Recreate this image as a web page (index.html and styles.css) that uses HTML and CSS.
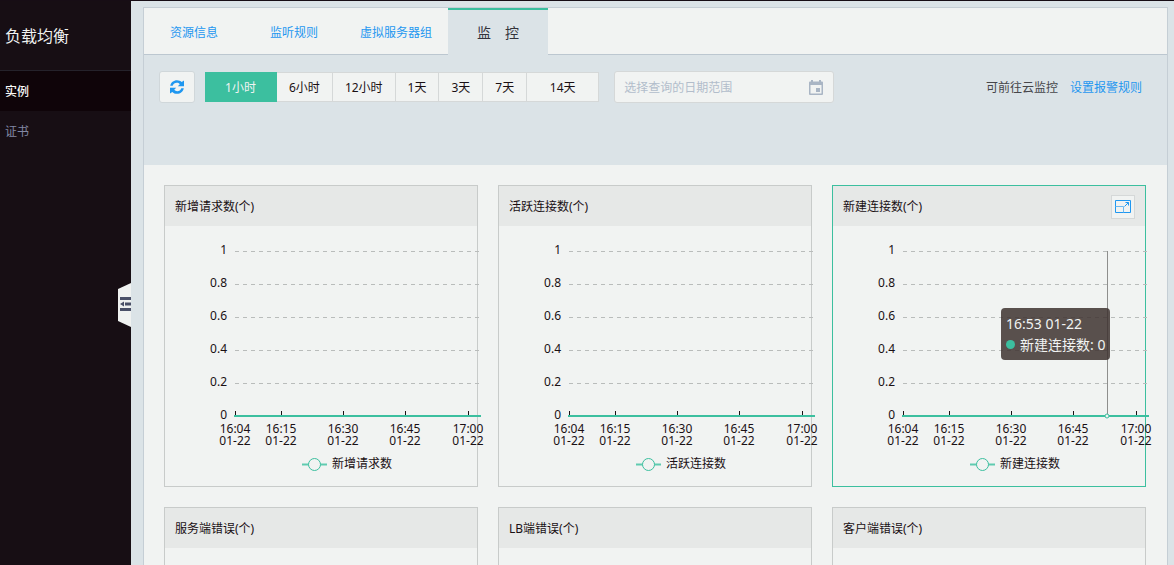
FILE: index.html
```html
<!DOCTYPE html>
<html lang="zh-CN">
<head>
<meta charset="utf-8">
<meta name="viewport" content="width=device-width, initial-scale=1">
<title>负载均衡 - 监控</title>
<link rel="stylesheet" href="styles.css">
</head>
<body>
<div class="layout">
  <aside class="sidebar">
    <h1 class="sidebar-title">负载均衡</h1>
    <nav class="sidebar-nav">
      <a class="nav-item nav-item-active" href="#instances">实例</a>
      <a class="nav-item" href="#certs">证书</a>
    </nav>
    <button class="collapse" type="button" aria-label="收起菜单">
      <svg width="13" height="44" viewBox="0 0 13 44">
        <path d="M13 0 0 6v32l13 6z" fill="#f0f2f1"/>
        <path d="M2 14h11v3H2zM7 19.500h6v3H7zM2 25h11v3H2zM6 18.500v5L2 21z" fill="#4a5068"/>
      </svg>
    </button>
  </aside>

  <main class="main">
    <section class="panel">
      <nav class="tabs">
        <a class="tab" href="#info">资源信息</a>
        <a class="tab" href="#listeners">监听规则</a>
        <a class="tab" href="#groups">虚拟服务器组</a>
        <a class="tab tab-active" href="#monitor">监&emsp;控</a>
      </nav>

      <div class="toolbar">
        <button class="refresh" type="button" aria-label="刷新">
          <svg width="16" height="16" viewBox="0 0 16 16" fill="#1f97f0">
            <path d="M1.200 6.800C1.800 3.400 4.600 1.200 8 1.200c1.900 0 3.500.7 4.700 1.900L15 1.500v5.700H8.800l2-2C10 4.300 9 3.800 7.800 3.800c-2 0-3.500 1.100-4.100 3z"/>
            <path d="M14.800 9.200c-.6 3.400-3.400 5.600-6.800 5.600-1.900 0-3.500-.7-4.700-1.900L1 14.500V8.800h6.200l-2 2c.8.900 1.800 1.400 3 1.400 2 0 3.500-1.100 4.100-3z"/>
          </svg>
        </button>
        <div class="ranges">
          <button class="range range-wide range-active" type="button">1小时</button>
          <button class="range" type="button">6小时</button>
          <button class="range" type="button">12小时</button>
          <button class="range" type="button">1天</button>
          <button class="range" type="button">3天</button>
          <button class="range" type="button">7天</button>
          <button class="range range-wide" type="button">14天</button>
        </div>
        <label class="date">
          <input class="date-input" type="text" placeholder="选择查询的日期范围" aria-label="日期范围">
          <svg width="14" height="16" viewBox="0 0 14 16" fill="#a9b5c4">
            <path fill-rule="evenodd" d="M2 0h2v1.500h6V0h2v1.500h1q1 0 1 1V14q0 1-1 1H1q-1 0-1-1V2.500q0-1 1-1h1zM1.500 5v8.500h11V5z"/>
            <path d="M7 8h4v4H7z"/>
          </svg>
        </label>
        <p class="alarm">可前往云监控<a class="alarm-link" href="#alarm">设置报警规则</a></p>
      </div>

      <div class="cards">
        <article class="card">
          <header class="card-head"><h2 class="card-title">新增请求数(个)</h2></header>
          <svg class="chart" viewBox="0 0 312 260">
            <path class="grid" d="M70 25.500h244M70 58.500h244M70 91.500h244M70 124.500h244M70 157.500h244"/>
            <path class="ticks" d="M70.500 185v5M116.500 185v5M178.500 185v5M240.500 185v5M303.500 185v5"/>
            <path class="series" d="M69 190h247"/>
            <g class="y-labels">
              <text x="62" y="28">1</text><text x="62" y="61">0.8</text><text x="62" y="94">0.6</text>
              <text x="62" y="127">0.4</text><text x="62" y="160">0.2</text><text x="62" y="193">0</text>
            </g>
            <g class="x-labels">
              <text x="70" y="207">16:04</text><text x="116" y="207">16:15</text><text x="178" y="207">16:30</text><text x="240" y="207">16:45</text><text x="303" y="207">17:00</text>
              <text x="70" y="219">01-22</text><text x="116" y="219">01-22</text><text x="178" y="219">01-22</text><text x="240" y="219">01-22</text><text x="303" y="219">01-22</text>
            </g>
            <path class="legend-line" d="M137 238.500h25"/><circle class="legend-dot" cx="149.500" cy="238.500" r="6"/>
            <text x="167" y="242">新增请求数</text>
          </svg>
        </article>

        <article class="card">
          <header class="card-head"><h2 class="card-title">活跃连接数(个)</h2></header>
          <svg class="chart" viewBox="0 0 312 260">
            <path class="grid" d="M70 25.500h244M70 58.500h244M70 91.500h244M70 124.500h244M70 157.500h244"/>
            <path class="ticks" d="M70.500 185v5M116.500 185v5M178.500 185v5M240.500 185v5M303.500 185v5"/>
            <path class="series" d="M69 190h247"/>
            <g class="y-labels">
              <text x="62" y="28">1</text><text x="62" y="61">0.8</text><text x="62" y="94">0.6</text>
              <text x="62" y="127">0.4</text><text x="62" y="160">0.2</text><text x="62" y="193">0</text>
            </g>
            <g class="x-labels">
              <text x="70" y="207">16:04</text><text x="116" y="207">16:15</text><text x="178" y="207">16:30</text><text x="240" y="207">16:45</text><text x="303" y="207">17:00</text>
              <text x="70" y="219">01-22</text><text x="116" y="219">01-22</text><text x="178" y="219">01-22</text><text x="240" y="219">01-22</text><text x="303" y="219">01-22</text>
            </g>
            <path class="legend-line" d="M137 238.500h25"/><circle class="legend-dot" cx="149.500" cy="238.500" r="6"/>
            <text x="167" y="242">活跃连接数</text>
          </svg>
        </article>

        <article class="card card-active">
          <header class="card-head">
            <h2 class="card-title">新建连接数(个)</h2>
            <button class="expand" type="button" aria-label="放大">
              <svg width="16" height="14" viewBox="0 0 16 14" fill="none" stroke="#1f97f0">
                <path d="M.5 .5h15v12H.5z"/>
                <path d="M.5 6.500h8v6" stroke="#6bb9f1"/>
                <path d="M10.500 2.500h3v3M13.500 2.500l-4 4"/>
              </svg>
            </button>
          </header>
          <svg class="chart" viewBox="0 0 312 260">
            <path class="grid" d="M70 25.500h244M70 58.500h244M70 91.500h244M70 124.500h244M70 157.500h244"/>
            <path class="ticks" d="M70.500 185v5M116.500 185v5M178.500 185v5M240.500 185v5M303.500 185v5"/>
            <path class="series" d="M69 190h247"/>
            <path class="pointer" d="M274.500 25v164"/><circle class="point" cx="274" cy="190" r="2"/>
            <g class="y-labels">
              <text x="62" y="28">1</text><text x="62" y="61">0.8</text><text x="62" y="94">0.6</text>
              <text x="62" y="127">0.4</text><text x="62" y="160">0.2</text><text x="62" y="193">0</text>
            </g>
            <g class="x-labels">
              <text x="70" y="207">16:04</text><text x="116" y="207">16:15</text><text x="178" y="207">16:30</text><text x="240" y="207">16:45</text><text x="303" y="207">17:00</text>
              <text x="70" y="219">01-22</text><text x="116" y="219">01-22</text><text x="178" y="219">01-22</text><text x="240" y="219">01-22</text><text x="303" y="219">01-22</text>
            </g>
            <path class="legend-line" d="M137 238.500h25"/><circle class="legend-dot" cx="149.500" cy="238.500" r="6"/>
            <text x="167" y="242">新建连接数</text>
          </svg>
          <div class="tooltip" role="tooltip">
            <div>16:53 01-22</div>
            <div class="tooltip-row"><span class="dot"></span>新建连接数: 0</div>
          </div>
        </article>

        <article class="card">
          <header class="card-head"><h2 class="card-title">服务端错误(个)</h2></header>
          <svg class="chart" viewBox="0 0 312 260"></svg>
        </article>
        <article class="card">
          <header class="card-head"><h2 class="card-title">LB端错误(个)</h2></header>
          <svg class="chart" viewBox="0 0 312 260"></svg>
        </article>
        <article class="card">
          <header class="card-head"><h2 class="card-title">客户端错误(个)</h2></header>
          <svg class="chart" viewBox="0 0 312 260"></svg>
        </article>
      </div>
    </section>
  </main>
</div>
</body>
</html>
```
FILE: styles.css
```css
* { box-sizing: border-box; }

body {
  margin: 0;
  overflow: hidden;
  background: #dbe3e7;
  color: #1a1014;
  font: 12px/20px "Noto Sans", "Noto Sans CJK SC", sans-serif;
}

button, input { font: inherit; color: inherit; }
button { cursor: pointer; }
a { color: #1f97f0; text-decoration: none; }
h1, h2, p { margin: 0; font-weight: 400; }

.layout {
  display: flex;
  height: 100vh;
  border-top: 1px solid #170d15;
}

/* Sidebar */
.sidebar {
  position: relative;
  flex: none;
  width: 131px;
  background: #170e14;
}
.sidebar-title {
  height: 70px;
  padding-left: 5px;
  border-bottom: 1px solid #25222b;
  color: #f0f2f1;
  font-size: 16px;
  line-height: 70px;
}
.nav-item {
  display: block;
  height: 40px;
  padding-left: 5px;
  color: #8288a4;
  line-height: 42px;
}
.nav-item-active {
  background: #0f0409;
  color: #f8f8f6;
  font-weight: 500;
}
.collapse {
  position: absolute;
  top: 50%;
  right: 0;
  padding: 0;
  border: 0;
  background: none;
}
.collapse svg { display: block; }

/* Panel */
.main {
  flex: 1;
  min-width: 0;
  padding: 6px 6px 0 12px;
}
.panel {
  min-height: 100%;
  border: 1px solid #c5ced5;
  background: #f1f3f2;
}
.tabs {
  display: flex;
  height: 47px;
  border-bottom: 1px solid #bcc7d0;
}
.tab {
  min-width: 100px;
  height: 47px;
  padding: 0 16px;
  line-height: 50px;
  text-align: center;
}
.tab-active {
  border-top: 2px solid #3cbf9f;
  background: #dbe3e7;
  color: #33333b;
  font-size: 14px;
  line-height: 46px;
}

/* Toolbar */
.toolbar {
  display: flex;
  align-items: flex-start;
  min-height: 110px;
  padding: 16px 25px 16px 15px;
  background: #dbe3e7;
}
.refresh {
  display: flex;
  align-items: center;
  justify-content: center;
  width: 36px;
  height: 32px;
  margin-right: 10px;
  padding: 0;
  border: 1px solid #d0d7da;
  border-radius: 3px;
  background: #f1f3f2;
}
.ranges {
  display: flex;
  height: 32px;
  align-items: center;
  margin-right: 15px;
}
.range {
  height: 30px;
  padding: 2px 12px 0;
  border: 1px solid #d5d8d8;
  border-left: 0;
  background: #f1f3f2;
  white-space: nowrap;
}
.range-wide { width: 72px; }
.range-active {
  border-color: #3cbf9f;
  background: #3cbf9f;
  color: #f1f3f2;
}
.date {
  display: flex;
  align-items: center;
  width: 220px;
  height: 32px;
  padding: 2px 10px 0 9px;
  border: 1px solid #d5d8d8;
  border-radius: 3px;
  background: #f1f3f2;
}
.date-input {
  flex: 1;
  min-width: 0;
  padding: 0;
  border: 0;
  outline: 0;
  background: none;
}
.date-input::placeholder { color: #b2bdcb; opacity: 1; }
.alarm {
  margin-left: auto;
  color: #46464a;
  line-height: 34px;
}
.alarm-link { margin-left: 12px; }

/* Chart cards */
.cards {
  display: grid;
  grid-template-columns: repeat(3, minmax(0, 1fr));
  gap: 20px;
  padding: 20px 21px 20px 20px;
}
.card {
  position: relative;
  border: 1px solid #c8cbca;
}
.card-active { border-color: #3cbf9f; }
.card-head {
  display: flex;
  align-items: center;
  justify-content: space-between;
  height: 40px;
  padding: 2px 10px 0;
  background: #e6e8e7;
}
.card-title { font-size: 12px; }
.expand {
  display: flex;
  align-items: center;
  justify-content: center;
  width: 24px;
  height: 24px;
  padding: 0;
  border: 1px solid #d5d8d8;
  background: #f1f3f2;
}
.chart {
  display: block;
  width: 100%;
  overflow: visible;
  fill: #1a1014;
}
.grid { fill: none; stroke: #b9bcbb; stroke-dasharray: 4 4; }
.ticks { fill: none; stroke: #1a1014; }
.series { fill: none; stroke: #3cbf9f; stroke-width: 2; }
.pointer { fill: none; stroke: #8e8e8d; }
.point { fill: #f1f3f2; stroke: #3cbf9f; }
.y-labels { text-anchor: end; }
.x-labels { text-anchor: middle; }
.legend-line { fill: none; stroke: #5fcbb0; stroke-width: 2; }
.legend-dot { fill: #f1f3f2; stroke: #3cbf9f; }

.tooltip {
  position: absolute;
  top: 122px;
  left: 168px;
  padding: 5px;
  border-radius: 4px;
  background: rgba(62, 50, 48, 0.85);
  color: #f1f3f2;
  font-size: 14px;
  line-height: 21px;
  white-space: nowrap;
}
.tooltip-row { display: flex; align-items: center; gap: 5px; }
.dot {
  width: 9px;
  height: 9px;
  border-radius: 50%;
  background: #3cbf9f;
}
```
